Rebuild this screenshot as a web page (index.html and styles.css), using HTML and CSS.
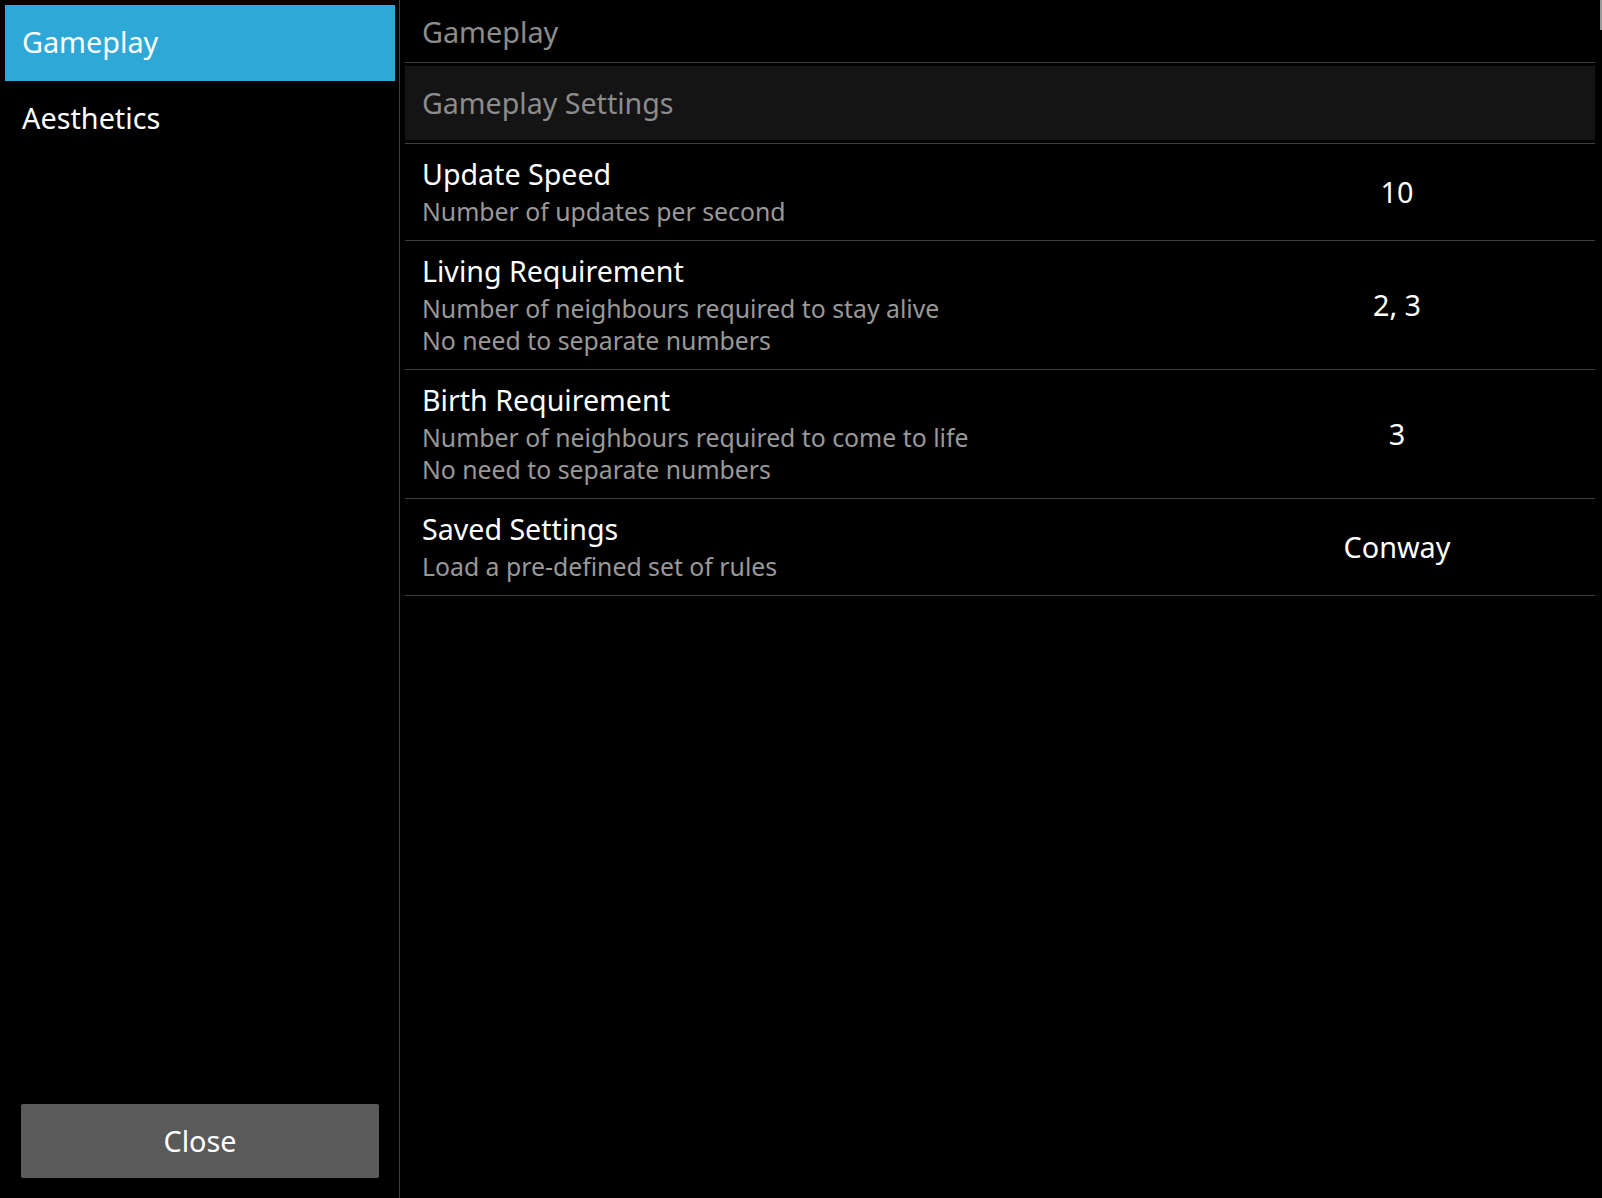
FILE: index.html
```html
<!DOCTYPE html>
<html>
<head>
<meta charset="utf-8">
<title>Settings</title>
<link rel="stylesheet" href="styles.css">
</head>
<body>
<div class="screen">
  <aside class="sidebar">
    <nav class="nav">
      <div class="nav-item active">Gameplay</div>
      <div class="nav-item">Aesthetics</div>
    </nav>
    <button class="close-btn">Close</button>
  </aside>
  <main class="content">
    <div class="page-title">Gameplay</div>
    <div class="category-wrap">
      <div class="category">Gameplay Settings</div>
    </div>
    <div class="pref">
      <div class="pref-text">
        <div class="pref-title">Update Speed</div>
        <div class="pref-summary">Number of updates per second</div>
      </div>
      <div class="pref-value">10</div>
    </div>
    <div class="pref">
      <div class="pref-text">
        <div class="pref-title">Living Requirement</div>
        <div class="pref-summary">Number of neighbours required to stay alive<br>No need to separate numbers</div>
      </div>
      <div class="pref-value">2, 3</div>
    </div>
    <div class="pref">
      <div class="pref-text">
        <div class="pref-title">Birth Requirement</div>
        <div class="pref-summary">Number of neighbours required to come to life<br>No need to separate numbers</div>
      </div>
      <div class="pref-value">3</div>
    </div>
    <div class="pref">
      <div class="pref-text">
        <div class="pref-title">Saved Settings</div>
        <div class="pref-summary">Load a pre-defined set of rules</div>
      </div>
      <div class="pref-value">Conway</div>
    </div>
  </main>
  <div class="scroll-thumb"></div>
</div>
</body>
</html>
```
FILE: styles.css
```css
html, body {
  margin: 0;
  padding: 0;
  background: #000;
}

body {
  font-family: "Noto Sans", "Open Sans", sans-serif;
  color: #fff;
}

.screen {
  position: relative;
  display: flex;
  width: 1602px;
  height: 1198px;
  overflow: hidden;
}

/* ---------- sidebar ---------- */
.sidebar {
  width: 390px;
  padding: 5px 4px 5px 5px;
  border-right: 1px solid #3e3e3e;
  display: flex;
  flex-direction: column;
  flex-shrink: 0;
}

.nav {
  display: flex;
  flex-direction: column;
}

.nav-item {
  height: 74px;
  line-height: 74px;
  padding: 0 0 2px 17px;
  font-size: 28.8px;
  color: #fff;
}

.nav-item.active {
  background: #2ea8d6;
}

.close-btn {
  margin: auto 16px 15px 16px;
  height: 74px;
  background: #5a5a5a;
  border: none;
  border-radius: 2px;
  color: #fff;
  font-family: "Noto Sans", "Open Sans", sans-serif;
  font-size: 28.8px;
  line-height: 72px;
  padding: 1px 0 1px 0;
}

/* ---------- content ---------- */
.content {
  flex: 1;
  padding: 0 7px 0 5px;
  display: flex;
  flex-direction: column;
}

.page-title {
  padding: 11px 17px 9px 17px;
  line-height: 42px;
  font-size: 28.8px;
  color: #8c8c8c;
  border-bottom: 1px solid #3e3e3e;
}

.category-wrap {
  padding: 3px 0;
  border-bottom: 1px solid #3e3e3e;
}

.category {
  background: #141414;
  height: 72px;
  line-height: 72px;
  padding: 1px 17px 1px 17px;
  font-size: 28.6px;
  color: #8c8c8c;
}

.pref {
  display: flex;
  align-items: center;
  border-bottom: 1px solid #3e3e3e;
  padding: 8px 0 13px 17px;
}

.pref-text {
  flex: 1;
}

.pref-title {
  font-size: 28.6px;
  line-height: 43px;
  color: #fff;
}

.pref-summary {
  font-size: 24.8px;
  line-height: 32px;
  color: #999;
}

.pref-value {
  width: 396px;
  text-align: center;
  font-size: 28.8px;
  color: #fff;
  margin-top: 3px;
}

.scroll-thumb {
  position: absolute;
  top: 0;
  right: 0;
  width: 2px;
  height: 30px;
  background: #9a9a9a;
}
```
